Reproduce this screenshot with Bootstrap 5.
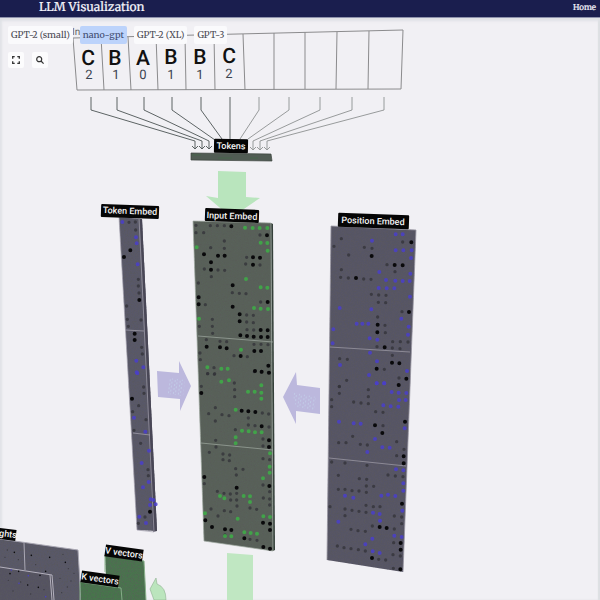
<!DOCTYPE html>
<html lang="en">
<head>
<meta charset="utf-8">
<meta name="viewport" content="width=device-width, initial-scale=1">
<title>LLM Visualization</title>
<link href="https://cdn.jsdelivr.net/npm/bootstrap@5.3.0/dist/css/bootstrap.min.css" rel="stylesheet">
<style>
body{background:#f1f0f4;font-family:"Merriweather","DejaVu Serif Condensed","DejaVu Serif",serif;text-rendering:geometricPrecision}
.topbar{background:#1a1e4e;height:18px;padding:0 4px 0 39px;border-bottom:1px solid #8f93ad}
.brand{font-size:12px;line-height:16px;color:#f3f3fa;-webkit-text-stroke:.2px}
.home{font-size:8px;line-height:16px;color:#f3f3fa;-webkit-text-stroke:.2px}
.scene{box-shadow:inset 0 3px 3px #dfe1e6,inset 2px 0 2px #e2e4e8,inset -2px 0 1px #dcdfe2}
.tools{padding:8px}
.models{gap:7px}
.model{font-size:9px;line-height:12px;padding:3px;border:0;border-radius:2px;background:#fafafc;color:#484852}
.model.active{background:#bcd3fb;color:#3f4b70}
.views{gap:8px;margin-top:8px}
.view{width:16px;height:16px;border:0;border-radius:2px;background:#fcfcfd;color:#333}
.world{font-family:Roboto,sans-serif}
.tag{fill:#050505}
.tagtext{fill:#f6f6f6;font-size:9px;font-weight:500;text-anchor:middle}
.letter{font-size:21px;font-weight:500;text-anchor:middle;fill:#111}
.index{font-size:13px;text-anchor:middle;fill:#3b4450}
</style>
<script src="https://cdn.jsdelivr.net/npm/bootstrap@5.3.0/dist/js/bootstrap.bundle.min.js"></script>
</head>
<body class="d-flex flex-column vh-100 overflow-hidden">
<header class="topbar d-flex justify-content-between flex-shrink-0">
<span class="brand">LLM Visualization</span>
<a class="home text-decoration-none" href="#">Home</a>
</header>
<main class="scene position-relative flex-grow-1 overflow-hidden">
<svg class="world d-block w-100 h-100" viewBox="0 18 600 582" preserveAspectRatio="xMidYMin slice" role="img" aria-label="Model layers">
<defs>
<filter id="grain" x="0" y="0" width="1" height="1"><feTurbulence type="fractalNoise" baseFrequency=".7" numOctaves="2" seed="4"/><feColorMatrix values="0 0 0 0 .1  0 0 0 0 .1  0 0 0 0 .1  0 0 0 1.6 -.7"/><feComposite in2="SourceGraphic" operator="in"/><feBlend in2="SourceGraphic"/></filter>
<pattern id="speck" width="5" height="4" patternUnits="userSpaceOnUse" patternTransform="rotate(8)"><path d="M1 1h1M3 3h1" stroke="#c6dcf0"/></pattern>
</defs>
<text x="72" y="35" font-size="10" fill="#666">In</text>
<g fill="none" stroke="#8b8b8d">
<path d="M73 38L403 30L401 89L77 90ZM101 37L104 90M128 37L131 90M156 36L158 90M185 36L186 90M214 35L215 90M243 34L245 90M274 33V90M305 32V89M337 32L336 89M369 31L368 89"/>
</g>
<g><text class="letter" x="88" y="65">C</text><text class="letter" x="115" y="65">B</text><text class="letter" x="143" y="65">A</text><text class="letter" x="171" y="64">B</text><text class="letter" x="200" y="64">B</text><text class="letter" x="229" y="63">C</text></g>
<g><text class="index" x="89" y="79">2</text><text class="index" x="116" y="79">1</text><text class="index" x="143" y="79">0</text><text class="index" x="171" y="79">1</text><text class="index" x="200" y="79">1</text><text class="index" x="229" y="78">2</text></g>
<g fill="none" stroke-width=".9">
<path stroke="#4c5454" d="M91 97V110L195 141V149M117 97V110L202 141V149M144 97V110L209 141V149M172 97V110L215 140M201 97V110L222 139M230 97V140M192 146L195 149L198 146M199 146L202 149L205 146M206 146L209 149L212 146"/>
<path stroke="#8d9191" d="M259 97V110L240 139M289 97V110L248 139M320 97V110L253 141V149M352 97V110L260 141V149M384 97V110L267 141V149M250 147L253 150L256 147M257 147L260 150L263 147M264 147L267 150L270 147"/>
</g>
<path d="M191 153L271 154L272 161L191 160Z" fill="#515c54" stroke="#3c443e" stroke-width=".7"/><path d="M192 155h9M218 158h14M250 158h8" stroke="#47654a"/>
<path d="M218 171L246 172V197L260 198L238 213H226L206 196L218 198Z" fill="#b9e5bd"/>
<path d="M227 553L253 555V600H227Z" fill="#c0e7c2"/>
<path d="M157 371L179 373V361L191 386L180 411V399L158 397Z" fill="#bcb8dd"/><path d="M168 378l17 2-2 16-15-2z" fill="url(#speck)"/>
<path d="M283 397L296 372L297 385L320 388V414L296 411V424Z" fill="#bcb8dd"/><path d="M292 392l24 5-2 13-18-3z" fill="url(#speck)"/>

<path d="M119 217L142 219L157 531L137 530Z" fill="#595868" filter="url(#grain)"/><path d="M140 219L142 219L157 531L153 532Z" fill="#494756"/>
<path d="M119 217L139 218L154 532L137 530ZM126 330L144 331M133 433L150 435" fill="none" stroke="#a8a5b1" stroke-width=".7"/>
<path d="M193 221L271 223L273 551L204 541Z" fill="#586159" filter="url(#grain)"/><path d="M271 223L273 224L275 550L273 551Z" fill="#35403a"/>
<path d="M193 221L271 223L273 551L204 541ZM198 336L273 342M201 443L273 450" fill="none" stroke="#a0aaa2" stroke-width=".7"/>
<path d="M331 226L416 230L403 572L327 560Z" fill="#575565" filter="url(#grain)"/>
<path d="M327 560L331 226L416 230L403 572M330 347L410 352M329 458L406 466" fill="none" stroke="#9997a2" stroke-width=".8"/>
<g id="cells"></g>

<path d="M0 539L78 550L81 600H0Z" fill="#595867" filter="url(#grain)"/><path d="M0 539L78 550L81 600M24 543L25 570" fill="none" stroke="#aaa8b4"/>
<path d="M0 567L52 575L54 600H0Z" fill="#555362" filter="url(#grain)"/><path d="M0 567L52 575L54 600M50 575L52 600" fill="none" stroke="#b4b1bd"/>
<g id="corner"></g>
<path d="M105 555L144 561L146 600H107Z" fill="#4a734e" filter="url(#grain)"/><path d="M105 572V555L144 561L146 600" fill="none" stroke="#8bb28d"/>
<path d="M80 582L121 588L122 600H81Z" fill="#47744c" filter="url(#grain)"/><path d="M80 600V582L121 588L122 600" fill="none" stroke="#86ad89"/>
<path d="M150 589L156 578L157 584Q166 587 166 600H154Z" fill="#bbe5bd" stroke="#8db08f" stroke-width=".6"/>

<g transform="rotate(1 231 146)"><rect class="tag" x="214" y="139" width="34" height="14" rx="1"/><text class="tagtext" x="231" y="149">Tokens</text></g>
<g transform="rotate(2 130 211)"><rect class="tag" x="101" y="205" width="58" height="13" rx="1"/><text class="tagtext" x="130" y="214">Token Embed</text></g>
<g transform="rotate(2 232 215)"><rect class="tag" x="205" y="209" width="54" height="13" rx="1"/><text class="tagtext" x="232" y="219">Input Embed</text></g>
<g transform="rotate(2 373 221)"><rect class="tag" x="338" y="214" width="71" height="14" rx="1"/><text class="tagtext" x="373" y="224">Position Embed</text></g>
<g transform="rotate(8 124 553)"><rect class="tag" x="105" y="547" width="38" height="12"/><text class="tagtext" x="124" y="556">V vectors</text></g>
<g transform="rotate(8 100 579)"><rect class="tag" x="81" y="573" width="38" height="12"/><text class="tagtext" x="100" y="582">K vectors</text></g>
<g transform="rotate(7 8 534)"><rect class="tag" x="-20" y="529" width="36" height="11"/><text class="tagtext" x="8" y="537">ghts</text></g>
</svg>
<div class="tools position-absolute top-0 start-0">
<div class="models d-flex"><button class="model">GPT-2 (small)</button><button class="model active">nano-gpt</button><button class="model">GPT-2 (XL)</button><button class="model">GPT-3</button></div>
<div class="views d-flex">
<button class="view d-flex align-items-center justify-content-center p-0" aria-label="Fit view"><svg width="8" height="8" viewBox="0 0 8 8" fill="none" stroke="currentColor" stroke-width="1.3"><path d="M.7 2.7V.7h2M5.3.7h2v2M7.3 5.3v2h-2M2.7 7.3h-2v-2"/></svg></button>
<button class="view d-flex align-items-center justify-content-center p-0" aria-label="Zoom"><svg width="8" height="8" viewBox="0 0 8 8" fill="none" stroke="currentColor" stroke-width="1.2"><circle cx="3.2" cy="3.2" r="2.5"/><path d="M5 5l2.6 2.6"/></svg></button>
</div>
</div>
</main>
<script>
// Cell centres are stored in third-units, measured from each tile's origin.
const tiles=[
{x:90,y:200,
 dark:"121,151 102,171 148,300 134,401 134,420 424,79 531,106 342,163 384,167 404,167 489,172 510,173 363,187 489,194 428,256 326,292 326,313 428,320 533,306 449,343 449,364 533,391 512,390 451,406 471,408 491,410 513,411 533,411 350,440 390,442 410,445 452,468 493,453 513,453 535,497 363,209",
 mid:"136,66 137,90 145,238 145,258 147,279 112,358 115,379 155,442 157,462 117,67 110,318 153,360 318,76 318,98 341,98 361,77 382,77 403,77 362,143 403,123 403,145 343,207 384,210 404,211 364,230 467,192 510,195 470,172 325,249 346,314 427,278 448,280 468,281 470,345 490,346 470,366 490,368 512,306 367,358 367,379 368,400 328,379 471,389 491,390 349,419 390,424 410,425 492,433 513,433 534,434 432,467 472,470 330,459 331,479 372,503 353,521 374,521 493,515 514,517 535,518 510,105",
 hue:"97,66 138,112 140,130 143,193 139,482 160,502 142,520",
 green:"465,83 488,84 509,84 532,84 512,128 532,129 533,152 320,142 468,237 512,262 532,263 512,326 534,327 327,356 453,449 352,502 394,506 413,506 492,324"},
{x:90,y:370,
 dark:"126,86 180,425 515,5 495,3 537,8 455,122 475,124 496,126 515,169 537,211 537,231 440,353 343,321 538,348 334,69 519,458 540,461 463,505 520,531 540,536 366,471 405,478 424,480 346,451 540,480",
 mid:"161,51 162,70 128,125 146,107 132,181 152,220 174,299 175,317 165,441 145,460 168,149 353,11 373,13 433,39 434,59 434,80 334,49 376,113 356,131 396,134 417,137 376,153 517,129 536,132 475,144 475,165 495,167 537,171 436,179 437,296 439,315 377,211 378,231 358,247 399,252 419,255 399,269 418,272 519,207 519,228 519,266 539,269 459,298 343,341 382,364 402,370 421,372 519,345 520,384 539,387 440,370 440,390 539,405 363,417 403,422 422,425 441,408 480,414 500,418 384,438 480,508 501,511 539,365 422,390 405,495",
 hue:"140,7 132,143 166,185 177,242 155,279 176,336 159,352 182,388 180,405 148,440 168,459 197,403 190,390",
 green:"394,35 417,31 514,46 494,65 514,68 474,65 514,86 456,182 476,184 495,187 515,187 437,119 437,202 437,220 540,250 539,290 539,308 519,325 480,379 480,396 403,385 461,378 390,378 345,430 443,446 520,439 540,441 463,487 482,489 501,491 405,498 424,499"},
{x:270,y:200,
 dark:"424,127 374,195 398,196 417,336 323,374 322,397 344,442 366,488 388,490 320,506 409,536 305,168 258,234",
 mid:"306,145 351,194 192,139 212,232 235,234 281,237 303,238 326,285 304,283 348,286 325,307 347,308 323,351 345,376 346,398 321,440 367,444 390,446 391,425 414,426 368,425 214,116 236,165 283,142 214,209 209,476 232,478 343,508 387,534 387,556 208,559 230,541 367,466 398,126 375,215 396,335",
 hue:"377,103 398,103 306,122 400,151 425,151 377,151 423,174 328,216 421,221 348,240 376,242 398,243 419,243 326,264 350,265 373,265 420,290 209,324 304,328 394,356 416,380 414,404 299,415 322,419 188,430 190,388 260,371 277,371 295,371 300,458 321,484 210,495 297,525 320,550 343,550 411,513"},
{x:270,y:380,
 dark:"386,15 315,136 337,159 405,125 401,229 401,250 396,371 350,444 329,441 392,489 392,509 306,534 391,568",
 mid:"208,20 208,40 295,29 295,50 295,71 185,59 185,80 251,66 273,69 317,95 339,97 339,137 380,185 402,208 380,227 206,188 228,188 271,193 292,195 248,169 185,246 225,249 291,256 290,298 289,318 311,319 289,337 354,285 376,288 399,290 205,286 268,296 225,328 246,332 267,333 288,376 310,380 225,387 246,391 267,394 288,397 225,407 373,408 395,411 395,431 373,447 307,438 243,448 264,452 286,454 202,498 222,503 243,506 265,509 286,513 326,538 347,540 369,524 391,528 370,565 371,488 205,328 180,380 330,380",
 hue:"320,10 342,10 365,36 386,38 409,39 387,60 407,60 340,76 362,79 385,80 207,125 251,130 272,131 404,145 315,177 337,202 359,203 292,216 378,268 400,271 400,310 400,332 376,348 397,392 309,398 329,402 330,422 307,476 373,467 395,471 286,493 308,514 329,519 205,425 354,344 334,347 250,353 225,347"},
{x:0,y:510,small:true,
 dark:"115,232 120,196 30,191 56,184 83,225 137,184 149,142 94,136 196,157 43,127",
 mid:"22,120 55,149 107,164 189,133 205,176 180,205 202,231 185,248 25,211 39,243 62,216 92,252 132,239 222,190 213,213 15,142",
 hue:"85,197 57,220 137,260 34,180"}];
const looks={mid:["#323238",5,.75],hue:["#4a3fcb",6,.85],green:["#3cb446",6,.8],dark:["#09090b",6,1]};
const ns="http://www.w3.org/2000/svg";
function drawTile(t,parent){
 for(const k in looks){
  if(!t[k]) continue;
  const p=document.createElementNS(ns,"path"),[c,r,o]=looks[k];
  p.setAttribute("d",t[k].split(" ").map(v=>"M"+v+"h0").join(""));
  p.setAttribute("transform",`translate(${t.x} ${t.y}) scale(${1/3})`);
  p.setAttribute("stroke",c);
  p.setAttribute("stroke-width",t.small?r*.8:r*2);
  p.setAttribute("stroke-linecap","round");
  p.setAttribute("opacity",o);
  parent.append(p);
 }
}
tiles.forEach(t=>drawTile(t,document.getElementById(t.small?"corner":"cells")));
</script>
</body>
</html>
